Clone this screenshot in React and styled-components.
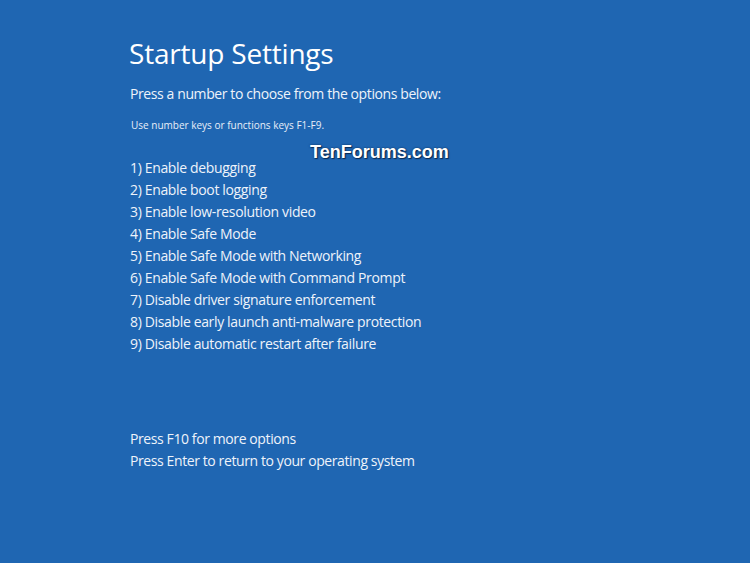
import styled, { createGlobalStyle } from 'styled-components';

const GlobalStyle = createGlobalStyle`
    html, body {
        margin: 0;
        padding: 0;
        background: #1f66b2;
    }
`;

const Screen = styled.div`
    position: relative;
    width: 750px;
    height: 563px;
    box-sizing: border-box;
    padding: 36px 0 0 129px;
    background: #1f66b2;
    color: #ffffff;
    font-family: "Open Sans", "Noto Sans", sans-serif;
    overflow: hidden;
`;

const Title = styled.h1`
    margin: 0;
    font-size: 28px;
    font-weight: 400;
    line-height: 34px;
    letter-spacing: -0.2px;
`;

const Prompt = styled.p`
    margin: 14px 0 0 1px;
    font-size: 14px;
    line-height: 20px;
    letter-spacing: -0.4px;
    color: #eef3fa;
`;

const Hint = styled.p`
    margin: 14px 0 0 2px;
    font-size: 10px;
    line-height: 14px;
    color: #e8eef8;
`;

const OptionList = styled.ol`
    list-style: none;
    margin: 25px 0 0 1px;
    padding: 0;
`;

const Option = styled.li`
    font-size: 14px;
    line-height: 22px;
    letter-spacing: -0.35px;
    color: #eef3fa;
`;

const Footer = styled.div`
    margin-top: 73px;
    margin-left: 1px;
    display: flex;
    flex-direction: column;
`;

const FooterLine = styled.span`
    font-size: 14px;
    line-height: 22px;
    letter-spacing: -0.4px;
    color: #eef3fa;
`;

const Watermark = styled.span`
    position: absolute;
    left: 310px;
    top: 142px;
    font-family: "Liberation Sans", Arial, sans-serif;
    font-weight: 700;
    font-size: 18px;
    color: #ffffff;
    text-shadow: 1px 1px 1px #0b2a52, 0 0 2px #0b2a52;
`;

const options = [
    'Enable debugging',
    'Enable boot logging',
    'Enable low-resolution video',
    'Enable Safe Mode',
    'Enable Safe Mode with Networking',
    'Enable Safe Mode with Command Prompt',
    'Disable driver signature enforcement',
    'Disable early launch anti-malware protection',
    'Disable automatic restart after failure',
];

function App() {
    return (
        <>
            <GlobalStyle />
            <Screen>
                <Title>Startup Settings</Title>
                <Prompt>Press a number to choose from the options below:</Prompt>
                <Hint>Use number keys or functions keys F1-F9.</Hint>
                <OptionList>
                    {options.map((text, i) => (
                        <Option key={text}>{i + 1}) {text}</Option>
                    ))}
                </OptionList>
                <Footer>
                    <FooterLine>Press F10 for more options</FooterLine>
                    <FooterLine>Press Enter to return to your operating system</FooterLine>
                </Footer>
                <Watermark>TenForums.com</Watermark>
            </Screen>
        </>
    );
}

export default App;
